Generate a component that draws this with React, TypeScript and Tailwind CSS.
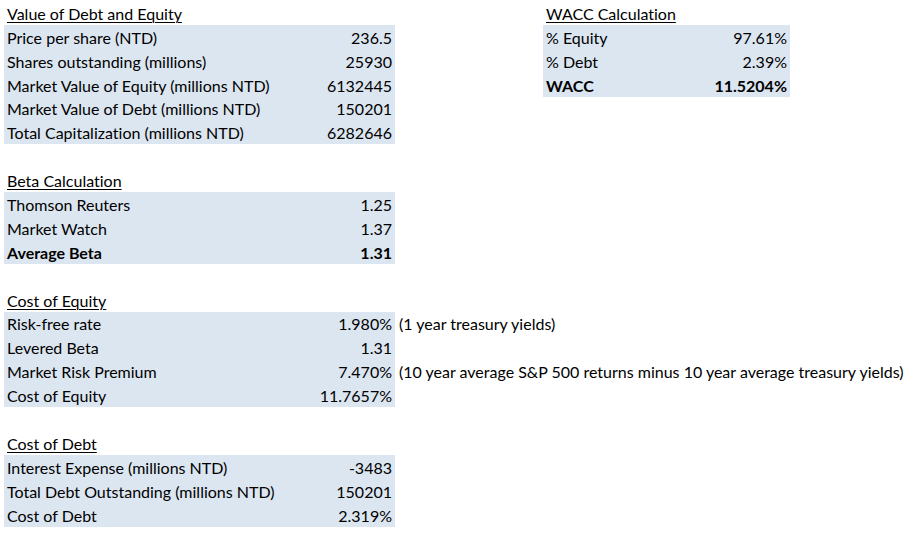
import React from "react";

type Row = { label: string; value: string; bold?: boolean; note?: string };

const font = { fontFamily: "Lato, 'Open Sans', sans-serif" };

function Title({ text }: { text: string }) {
  return (
    <div className="h-[23.9px] flex items-end pb-[3px] pl-[3px]">
      <span className="underline underline-offset-[2px] decoration-[1px] leading-none">{text}</span>
    </div>
  );
}

function Table({ rows, width }: { rows: Row[]; width: string }) {
  return (
    <div>
      {rows.map((r) => (
        <div key={r.label} className="flex h-[23.9px]">
          <div className={`${width} shrink-0 bg-[#dce6f1] flex items-end justify-between pb-[3px] px-[3px] ${r.bold ? "font-bold" : ""}`}>
            <span className="leading-none">{r.label}</span>
            <span className="leading-none">{r.value}</span>
          </div>
          {r.note && (
            <div className="flex items-end pb-[3px] pl-[4px] whitespace-nowrap">
              <span className="leading-none">{r.note}</span>
            </div>
          )}
        </div>
      ))}
    </div>
  );
}

function Gap() {
  return <div className="h-[23.9px]" />;
}

export default function App() {
  const s1: Row[] = [
    { label: "Price per share (NTD)", value: "236.5" },
    { label: "Shares outstanding (millions)", value: "25930" },
    { label: "Market Value of Equity (millions NTD)", value: "6132445" },
    { label: "Market Value of Debt (millions NTD)", value: "150201" },
    { label: "Total Capitalization (millions NTD)", value: "6282646" },
  ];
  const wacc: Row[] = [
    { label: "% Equity", value: "97.61%" },
    { label: "% Debt", value: "2.39%" },
    { label: "WACC", value: "11.5204%", bold: true },
  ];
  const beta: Row[] = [
    { label: "Thomson Reuters", value: "1.25" },
    { label: "Market Watch", value: "1.37" },
    { label: "Average Beta", value: "1.31", bold: true },
  ];
  const coe: Row[] = [
    { label: "Risk-free rate", value: "1.980%", note: "(1 year treasury yields)" },
    { label: "Levered Beta", value: "1.31" },
    {
      label: "Market Risk Premium",
      value: "7.470%",
      note: "(10 year average S&P 500 returns minus 10 year average treasury yields)",
    },
    { label: "Cost of Equity", value: "11.7657%" },
  ];
  const cod: Row[] = [
    { label: "Interest Expense (millions NTD)", value: "-3483" },
    { label: "Total Debt Outstanding (millions NTD)", value: "150201" },
    { label: "Cost of Debt", value: "2.319%" },
  ];

  return (
    <div
      className="w-[911px] h-[536px] bg-white text-black text-[16px] pt-[1px] pl-[4px] overflow-hidden [font-variant-ligatures:none]"
      style={font}
    >
      <div className="flex">
        <div className="w-[391px]">
          <Title text="Value of Debt and Equity" />
          <Table rows={s1} width="w-[391px]" />
        </div>
        <div className="ml-[148px] w-[247px]">
          <Title text="WACC Calculation" />
          <Table rows={wacc} width="w-[247px]" />
        </div>
      </div>
      <Gap />
      <Title text="Beta Calculation" />
      <Table rows={beta} width="w-[391px]" />
      <Gap />
      <Title text="Cost of Equity" />
      <Table rows={coe} width="w-[391px]" />
      <Gap />
      <Title text="Cost of Debt" />
      <Table rows={cod} width="w-[391px]" />
    </div>
  );
}
